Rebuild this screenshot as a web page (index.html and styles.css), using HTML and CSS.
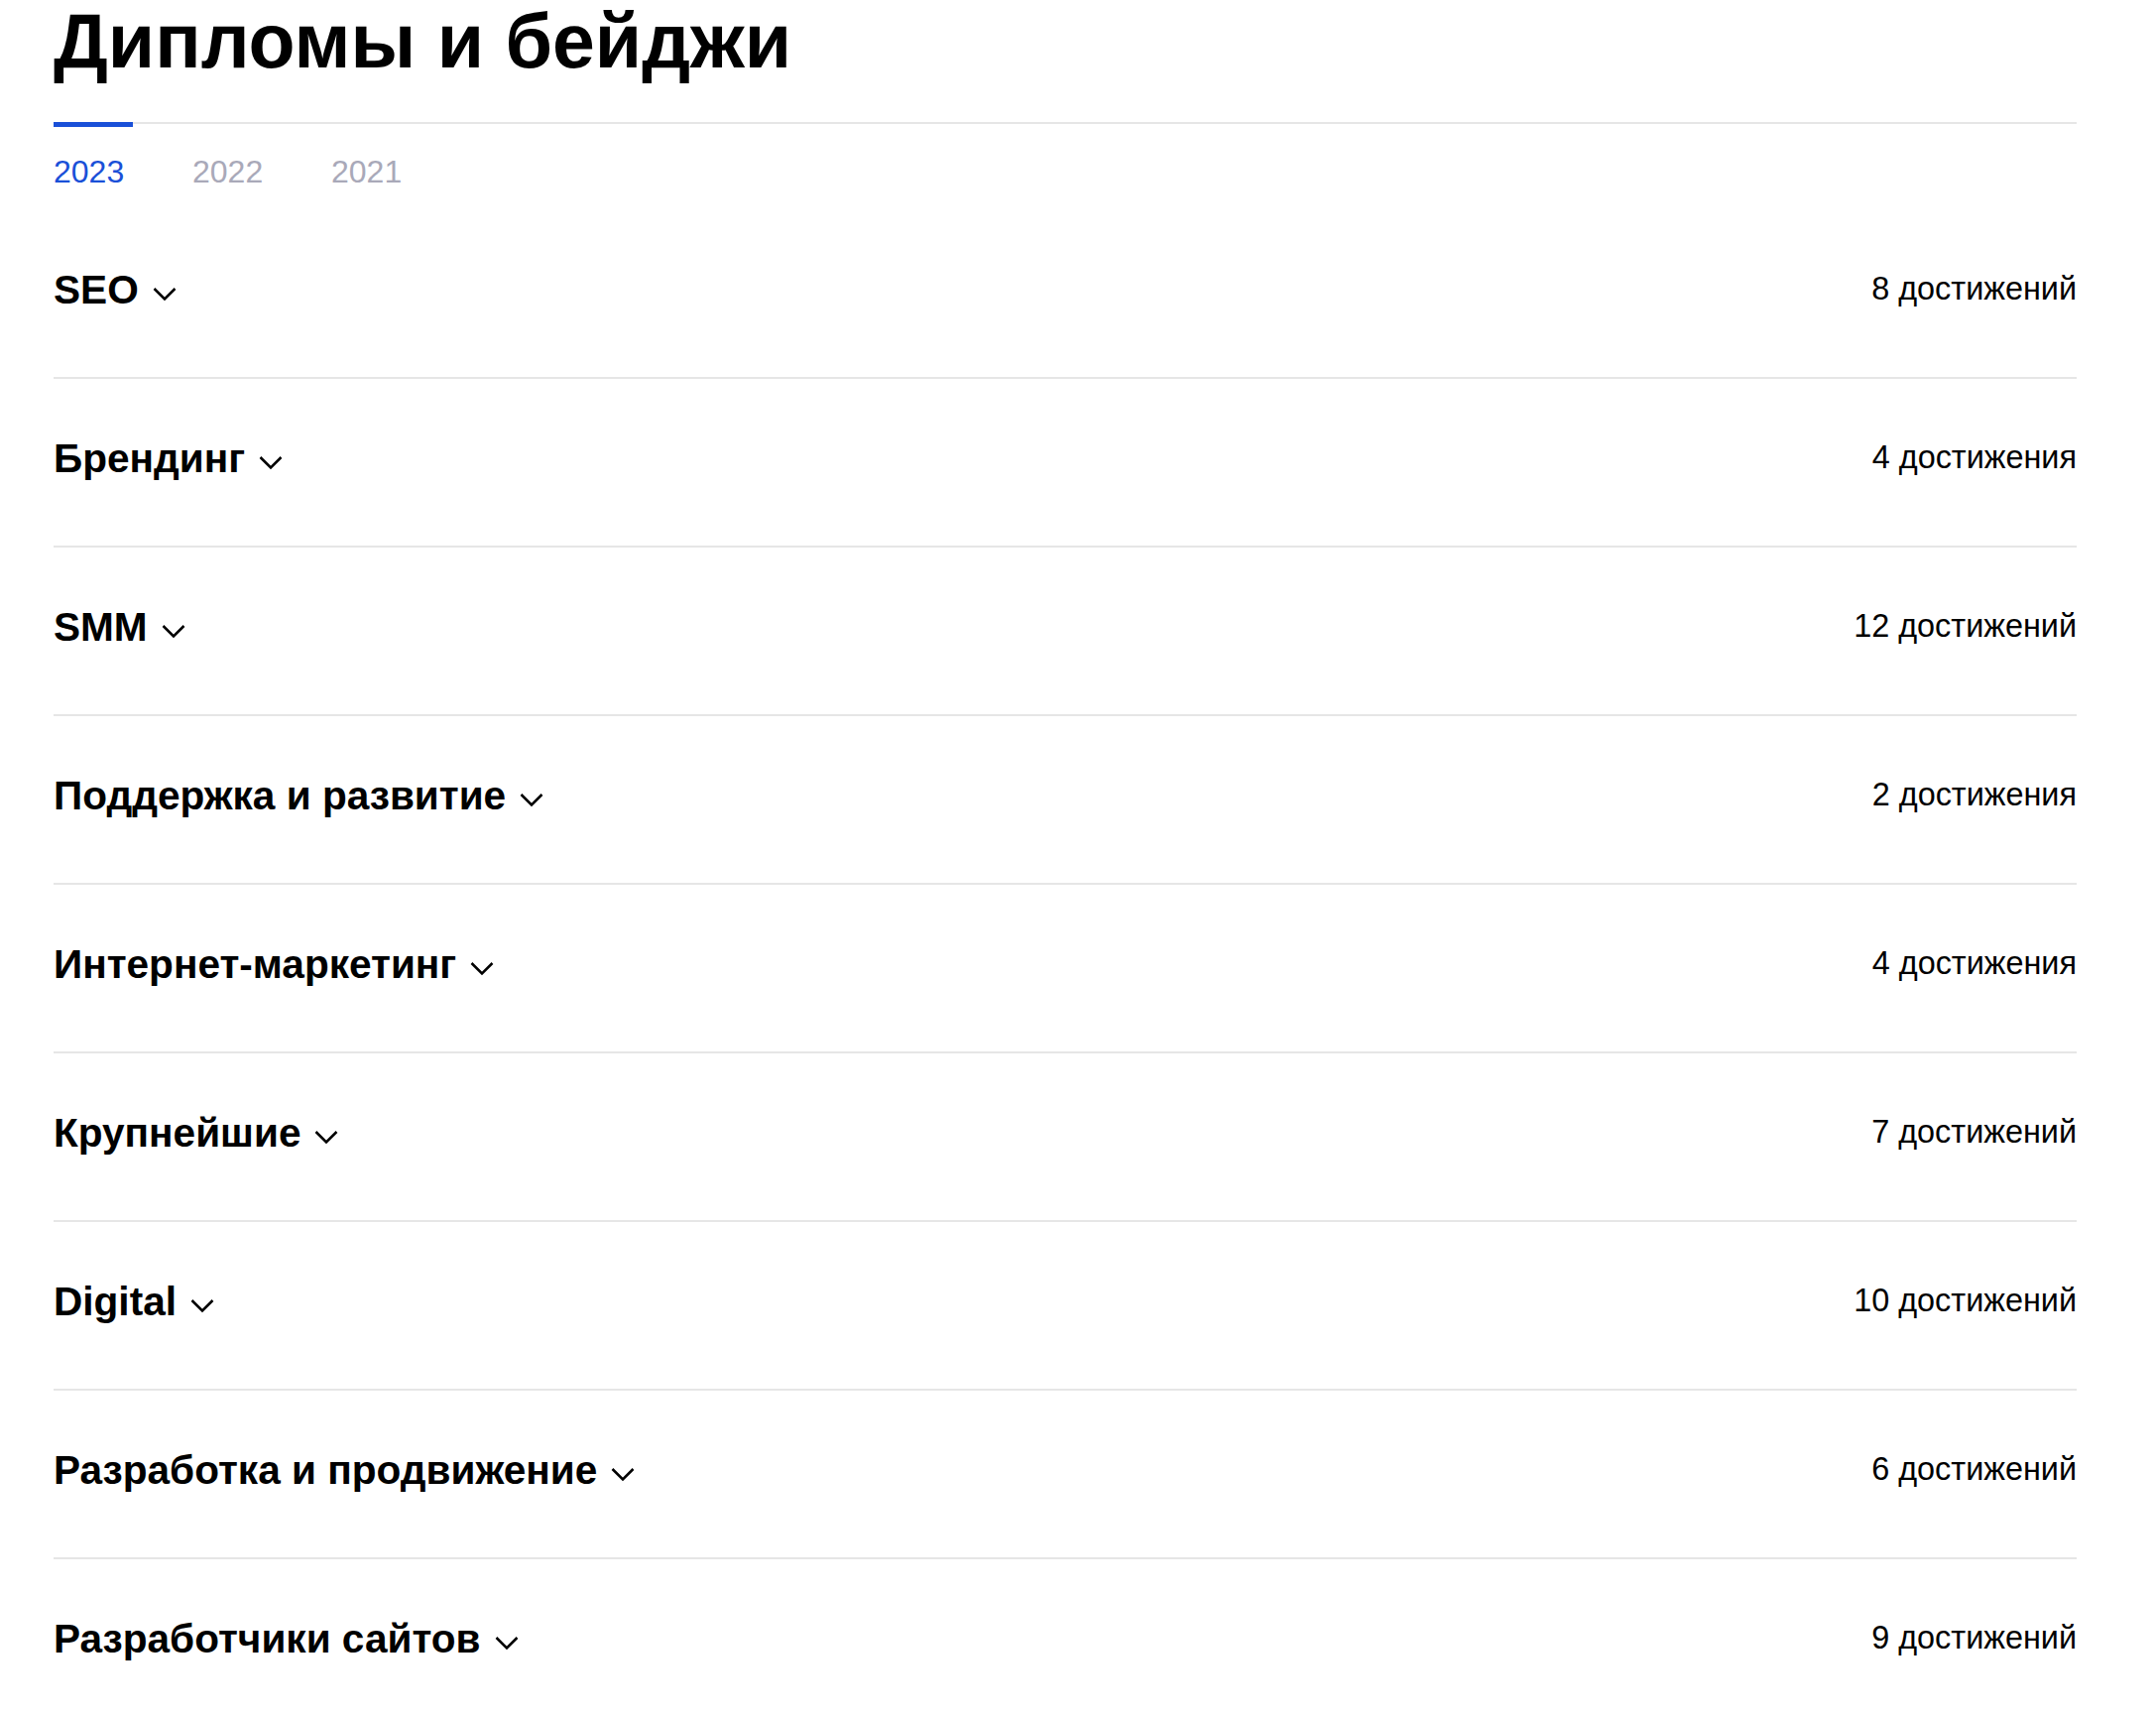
FILE: index.html
```html
<!DOCTYPE html>
<html lang="ru">
<head>
<meta charset="utf-8">
<title>Дипломы и бейджи</title>
<link rel="stylesheet" href="styles.css">
</head>
<body>
<main class="page">
  <h1 class="title">Дипломы и бейджи</h1>
  <nav class="tabs">
    <span class="tab tab-active">2023</span>
    <span class="tab">2022</span>
    <span class="tab">2021</span>
  </nav>
  <ul class="list">
    <li class="row"><span class="row-title">SEO<svg class="chev" viewBox="0 0 24 15"><polyline points="1.5,2 12,12.5 22.5,2"/></svg></span><span class="count">8 достижений</span></li>
    <li class="row"><span class="row-title">Брендинг<svg class="chev" viewBox="0 0 24 15"><polyline points="1.5,2 12,12.5 22.5,2"/></svg></span><span class="count">4 достижения</span></li>
    <li class="row"><span class="row-title">SMM<svg class="chev" viewBox="0 0 24 15"><polyline points="1.5,2 12,12.5 22.5,2"/></svg></span><span class="count">12 достижений</span></li>
    <li class="row"><span class="row-title">Поддержка и развитие<svg class="chev" viewBox="0 0 24 15"><polyline points="1.5,2 12,12.5 22.5,2"/></svg></span><span class="count">2 достижения</span></li>
    <li class="row"><span class="row-title">Интернет-маркетинг<svg class="chev" viewBox="0 0 24 15"><polyline points="1.5,2 12,12.5 22.5,2"/></svg></span><span class="count">4 достижения</span></li>
    <li class="row"><span class="row-title">Крупнейшие<svg class="chev" viewBox="0 0 24 15"><polyline points="1.5,2 12,12.5 22.5,2"/></svg></span><span class="count">7 достижений</span></li>
    <li class="row"><span class="row-title">Digital<svg class="chev" viewBox="0 0 24 15"><polyline points="1.5,2 12,12.5 22.5,2"/></svg></span><span class="count">10 достижений</span></li>
    <li class="row"><span class="row-title">Разработка и продвижение<svg class="chev" viewBox="0 0 24 15"><polyline points="1.5,2 12,12.5 22.5,2"/></svg></span><span class="count">6 достижений</span></li>
    <li class="row"><span class="row-title">Разработчики сайтов<svg class="chev" viewBox="0 0 24 15"><polyline points="1.5,2 12,12.5 22.5,2"/></svg></span><span class="count">9 достижений</span></li>
  </ul>
</main>
</body>
</html>
```
FILE: styles.css
```css
html, body {
  margin: 0;
  padding: 0;
  background: #fff;
}
body {
  font-family: "Liberation Sans", Arial, sans-serif;
  color: #000;
}
.page {
  padding: 0 80px 0 54px;
}
.title {
  margin: 0 0 41px;
  font-size: 77px;
  line-height: 82px;
  font-weight: 700;
}
.tabs {
  display: flex;
  gap: 60px;
  border-top: 2px solid #e6e6e6;
  margin-bottom: 20px;
}
.tab {
  width: 80px;
  margin-top: -2px;
  border-top: 5px solid transparent;
  padding-top: 27px;
  font-size: 32px;
  line-height: 37px;
  color: #a9a9b9;
}
.tab-active {
  border-top-color: #1a50d8;
  color: #1a50d8;
}
.list {
  list-style: none;
  margin: 0;
  padding: 0;
}
.row {
  display: flex;
  align-items: center;
  justify-content: space-between;
  padding: 57px 0 65px;
  border-bottom: 2px solid #e6e6e6;
}
.row-title {
  display: flex;
  align-items: center;
  font-size: 40.6px;
  line-height: 46px;
  font-weight: 700;
}
.chev {
  width: 24px;
  height: 15px;
  margin-left: 14px;
  margin-top: 9px;
  fill: none;
  stroke: #000;
  stroke-width: 2.5;
}
.count {
  font-size: 32.4px;
  line-height: 36px;
  margin-bottom: 3px;
}
```
